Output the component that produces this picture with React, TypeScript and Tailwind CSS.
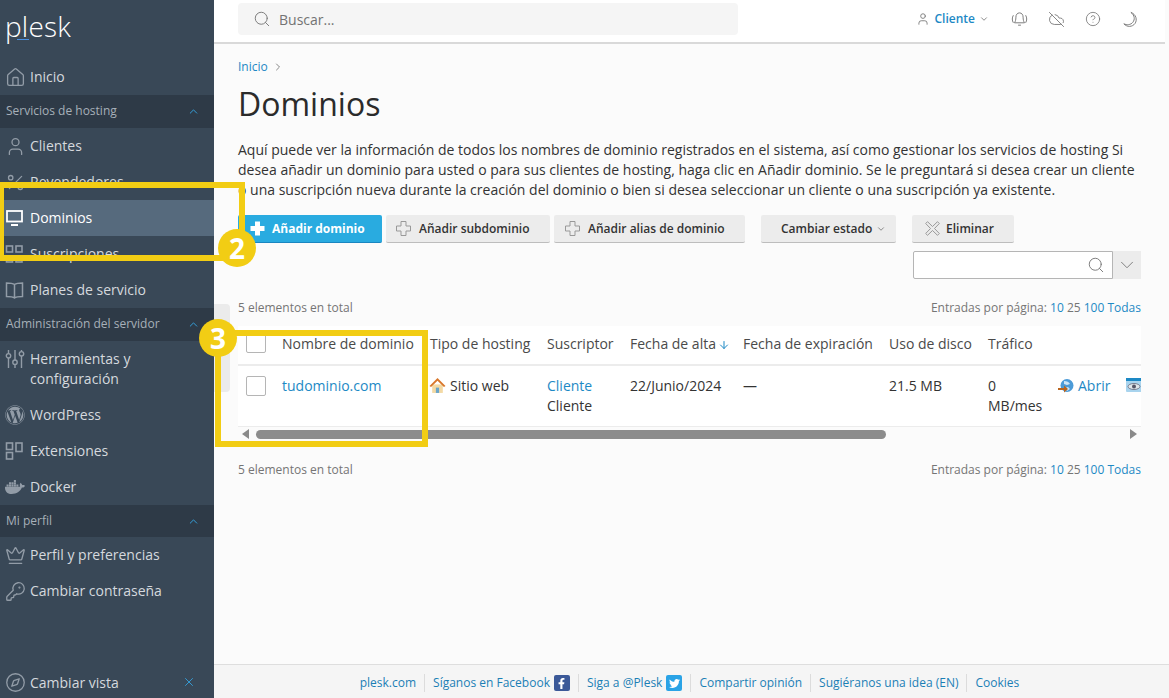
import {
  ChevronDown,
  ChevronRight,
  ChevronUp,
  CircleHelp,
  CloudOff,
  Compass,
  Crown,
  KeyRound,
  Percent,
  Search,
  House,
  User,
  X,
  ArrowDown,
} from "lucide-react";
import { FaDocker, FaFacebookF, FaTwitter, FaWordpress } from "react-icons/fa";
import type { ReactNode } from "react";

const iconClass = "h-[21px] w-[21px] shrink-0 stroke-[1.5]";

function Squares() {
  return (
    <svg viewBox="0 0 20 20" className="h-5 w-5 shrink-0" fill="none" stroke="currentColor" strokeWidth="1.6">
      <rect x="1.5" y="2" width="6" height="6" />
      <rect x="11" y="2" width="6" height="6" />
      <rect x="1.5" y="12" width="6" height="6" />
      <rect x="11" y="12" width="6" height="6" />
    </svg>
  );
}

function ExtIcon() {
  return (
    <svg viewBox="0 0 20 20" className="h-5 w-5 shrink-0" fill="none" stroke="currentColor" strokeWidth="1.6">
      <rect x="1.5" y="2" width="6" height="6.5" />
      <rect x="11" y="2" width="6" height="8.5" />
      <rect x="1.5" y="11.5" width="6" height="6.5" />
    </svg>
  );
}

function MonitorIcon() {
  return (
    <svg viewBox="0 0 20 20" className="h-5 w-5 shrink-0" fill="none" stroke="currentColor">
      <rect x="2" y="3" width="15" height="10.5" strokeWidth="1.8" />
      <path d="M6 17h7" strokeWidth="2" />
    </svg>
  );
}

function BookIcon() {
  return (
    <svg viewBox="0 0 20 20" className="h-5 w-5 shrink-0" fill="none" stroke="currentColor" strokeWidth="1.5">
      <path d="M9.5 4.5C8 3.5 4 3 1.5 3v13.5c2.500 0 6.500.2 8 1.500 1.500-1.300 5.500-1.500 8-1.500V3c-2.500 0-6.500.5-8 1.500zM9.500 4.500V18" />
    </svg>
  );
}

function ToolsIcon() {
  return (
    <svg viewBox="0 0 20 20" className="h-5 w-5 shrink-0" fill="none" stroke="currentColor" strokeWidth="1.4">
      <path d="M3.500 1v3.500M3.500 9v10M10 1v10M10 15.500V19M16.500 1v1.500M16.500 7v12" />
      <circle cx="3.500" cy="6.800" r="2.200" />
      <circle cx="10" cy="13.200" r="2.200" />
      <circle cx="16.500" cy="4.800" r="2.200" />
    </svg>
  );
}

function NavIcon({ children, active }: { children: ReactNode; active?: boolean }) {
  return (
    <span className={`flex w-5 shrink-0 justify-center ${active ? "text-white" : "text-[#929ca7]"}`}>{children}</span>
  );
}

function NavItem({ icon, children, active }: { icon: ReactNode; children: ReactNode; active?: boolean }) {
  return (
    <div
      className={`flex min-h-9 items-center gap-[5px] pl-[5px] text-[14px] leading-5 ${
        active ? "bg-[#566a7d] text-white" : "text-[#d5d9de]"
      }`}
    >
      <NavIcon active={active}>{icon}</NavIcon>
      <span>{children}</span>
    </div>
  );
}

function NavGroup({ title, short }: { title: string; short?: boolean }) {
  return (
    <div
      className={`flex items-center justify-between bg-[#2e3a47] pl-[6px] pr-[14px] text-[12px] text-[#a7b0b9] ${
        short ? "h-8" : "h-[33px] pb-[1px]"
      }`}
    >
      <span>{title}</span>
      <ChevronUp className="h-[13px] w-[13px] stroke-[1.75] text-[#35a4e0]" />
    </div>
  );
}

function Sidebar() {
  return (
    <aside className="flex h-full w-[214px] shrink-0 flex-col bg-[#394857]">
      <div className="relative h-[59px] shrink-0">
        <span className="absolute left-[5px] top-[2px] text-[28px] font-light leading-[48px] tracking-[0.2px] text-white">
          plesk
        </span>
        <span className="absolute left-[17px] top-[39px] h-[1px] w-3 bg-[#4a90e2]" />
      </div>
      <NavItem icon={<House className={iconClass} />}>Inicio</NavItem>
      <NavGroup title="Servicios de hosting" />
      <NavItem icon={<User className={iconClass} />}>Clientes</NavItem>
      <NavItem icon={<Percent className={iconClass} />}>Revendedores</NavItem>
      <NavItem active icon={<MonitorIcon />}>
        Dominios
      </NavItem>
      <NavItem icon={<Squares />}>Suscripciones</NavItem>
      <NavItem icon={<BookIcon />}>Planes de servicio</NavItem>
      <NavGroup title="Administración del servidor" />
      <div className="flex items-start gap-[5px] py-2 pl-[5px] text-[14px] leading-5 text-[#d5d9de]">
        <NavIcon>
          <ToolsIcon />
        </NavIcon>
        <span>
          Herramientas y
          <br />
          configuración
        </span>
      </div>
      <NavItem icon={<FaWordpress className="h-5 w-5" />}>WordPress</NavItem>
      <NavItem icon={<ExtIcon />}>Extensiones</NavItem>
      <NavItem icon={<FaDocker className="h-5 w-5" />}>Docker</NavItem>
      <NavGroup short title="Mi perfil" />
      <NavItem icon={<Crown className={iconClass} />}>Perfil y preferencias</NavItem>
      <NavItem icon={<KeyRound className={iconClass} />}>Cambiar contraseña</NavItem>
      <div className="mt-auto flex h-[30px] items-center justify-between pb-[2px] pl-[5px] pr-[18px] text-[14px] text-[#d5d9de]">
        <div className="flex items-center gap-[5px]">
          <NavIcon>
            <Compass className={iconClass} />
          </NavIcon>
          <span>Cambiar vista</span>
        </div>
        <X className="h-[14px] w-[14px] stroke-[1.5] text-[#35a4e0]" />
      </div>
    </aside>
  );
}

function BellIcon() {
  return (
    <svg viewBox="0 0 18 18" className="ml-[22px] h-[17px] w-[17px]" fill="none" stroke="currentColor" strokeWidth="1">
      <path d="M9 2c-2.500 0-3.800 2-3.800 4.500 0 3-.7 4.800-1.500 6h10.600c-.8-1.200-1.500-3-1.500-6C12.800 4 11.500 2 9 2zM7.500 15h3" />
      <path d="M2.500 4.500C1 7 1 10 2.500 12.500M15.500 4.500c1.500 2.500 1.500 5.500 0 8" />
    </svg>
  );
}

function MoonIcon() {
  return (
    <svg viewBox="0 0 18 18" className="ml-[20px] h-[17px] w-[17px]" fill="none" stroke="currentColor" strokeWidth="1">
      <path d="M10.500 1.500c4 3 4.500 7.500 2 10.500-2.300 2.800-6.500 3.200-9.500 1.500 3.500 4 9 3.500 11.800-.2 2.700-3.800 1.200-9.800-4.300-11.800z" />
    </svg>
  );
}

function Header() {
  return (
    <header className="mr-1 flex h-11 shrink-0 items-start justify-between border-b-2 border-[#d9d9d9] bg-white pl-6 pr-[27px] pt-[3px]">
      <div className="flex h-8 w-[500px] items-center gap-2 rounded bg-[#f5f5f5] pl-[15px] text-[14px] text-[#737373]">
        <Search className="h-[18px] w-[18px] stroke-[1.25] text-[#777]" />
        <span>Buscar...</span>
      </div>
      <div className="flex h-8 items-center text-[#777]">
        <User className="h-[14px] w-[14px] stroke-[1.5]" />
        <span className="ml-[5px] text-[12px] font-semibold text-[#1d89c5]">Cliente</span>
        <ChevronDown className="ml-1 h-2.5 w-2.5" />
        <BellIcon />
        <CloudOff className="ml-[20px] h-[17px] w-[17px] stroke-[1.25]" />
        <CircleHelp className="ml-[20px] h-4 w-4 stroke-[1.25]" />
        <MoonIcon />
      </div>
    </header>
  );
}

function ToolButton({ icon, children, className }: { icon?: ReactNode; children: ReactNode; className: string }) {
  return (
    <button
      className={`flex h-7 items-center rounded-[2px] border-b border-[#bdbdbd] bg-[#ececec] text-[12px] font-semibold text-[#333] ${className}`}
    >
      {icon}
      {children}
    </button>
  );
}

function CrossIcon({ solid }: { solid?: boolean }) {
  return (
    <svg
      viewBox="0 0 15 15"
      className="h-[15px] w-[15px] shrink-0"
      fill={solid ? "#fff" : "none"}
      stroke={solid ? "none" : "#999"}
    >
      <path d="M5 .5h5v4.500h4.500v5H10v4.500H5V10H.5V5H5z" />
    </svg>
  );
}

function CrossX() {
  return (
    <svg viewBox="0 0 15 15" className="mr-[6px] h-[15px] w-[15px] shrink-0" fill="none" stroke="#999">
      <path d="M2.500.7 7.500 5.500 12.500.7l1.800 1.800-4.800 5 4.800 5-1.800 1.800-5-4.800-5 4.800L.7 12.500l4.800-5-4.800-5z" />
    </svg>
  );
}

function PageLinks() {
  return (
    <div className="flex items-center justify-between text-[12px] text-[#757575]">
      <span>5 elementos en total</span>
      <span>
        Entradas por página: <span className="text-[#1d89c5]">10</span> 25{" "}
        <span className="text-[#1d89c5]">100 Todas</span>
      </span>
    </div>
  );
}

function HomeIcon() {
  return (
    <svg viewBox="0 0 16 16" className="-ml-[1px] mr-1 inline-block h-[17px] w-[17px] align-[-3px]">
      <rect x="3" y="7" width="10" height="8" fill="#f3d9a4" />
      <rect x="6.500" y="10" width="3" height="5" fill="#6aa5c9" />
      <path d="M0.500 8.500 8 1l7.500 7.500-1.400 1L8 3.600 1.900 9.500z" fill="#d9772b" />
    </svg>
  );
}

function DomainTable() {
  const th = "h-[39px] whitespace-nowrap px-0 pb-[4px] text-left text-[14px] font-normal text-[#4a4a4a]";
  const cell = "px-0 py-[10px] align-top text-[14px] leading-5";
  const td = `${cell} text-[#333]`;
  return (
    <table className="w-[903px] table-fixed border-collapse bg-white">
      <colgroup>
        <col className="w-[44px]" />
        <col className="w-[148px]" />
        <col className="w-[117px]" />
        <col className="w-[83px]" />
        <col className="w-[113px]" />
        <col className="w-[146px]" />
        <col className="w-[99px]" />
        <col className="w-[70px]" />
        <col />
      </colgroup>
      <thead>
        <tr className="border-b-2 border-[#ececec]">
          <th className={th}>
            <span className="ml-2 block h-5 w-5 rounded-[2px] border border-[#b5b5b5] bg-white" />
          </th>
          <th className={th}>Nombre de dominio</th>
          <th className={th}>Tipo de hosting</th>
          <th className={th}>Suscriptor</th>
          <th className={th}>
            Fecha de alta <ArrowDown className="-ml-[2px] inline h-3 w-3 text-[#1d89c5]" />
          </th>
          <th className={th}>Fecha de expiración</th>
          <th className={th}>Uso de disco</th>
          <th className={th}>Tráfico</th>
          <th className={th} />
        </tr>
      </thead>
      <tbody>
        <tr className="border-b border-[#ececec]">
          <td className={td}>
            <span className="ml-2 block h-5 w-5 rounded-[2px] border border-[#b5b5b5] bg-white" />
          </td>
          <td className={`${cell} text-[#1d89c5]`}>tudominio.com</td>
          <td className={td}>
            <HomeIcon />
            Sitio web
          </td>
          <td className={td}>
            <span className="text-[#1d89c5]">Cliente</span>
            <br />
            Cliente
          </td>
          <td className={td}>22/Junio/2024</td>
          <td className={td}>—</td>
          <td className={td}>21.5 MB</td>
          <td className={td}>
            0
            <br />
            MB/mes
          </td>
          <td className={td}>
            <div className="flex items-start overflow-hidden">
              <svg viewBox="0 0 16 16" className="mr-1 mt-[2px] h-4 w-4 shrink-0">
                <circle cx="9" cy="7.500" r="6.500" fill="#4c9bd8" />
                <path d="M6 3c3 0 5 1 6 3l-3 1-3-1zM7 10l3-1 2 2-3 2z" fill="#cfe6f7" />
                <path d="M0 10h6V7.500l4 3.500-4 3.500V12H0z" fill="#b9651f" />
              </svg>
              <span className="text-[#1d89c5]">Abrir</span>
              <svg viewBox="0 0 16 14" className="ml-4 mt-[2px] h-[14px] w-4 shrink-0">
                <rect width="16" height="14" rx="1" fill="#a9d4ee" />
                <rect width="16" height="3" fill="#1d89c5" />
                <ellipse cx="8" cy="8.500" rx="6" ry="3" fill="#dfe6ea" stroke="#667" strokeWidth="0.8" />
                <circle cx="8" cy="8.500" r="2" fill="#556" />
              </svg>
            </div>
          </td>
        </tr>
      </tbody>
    </table>
  );
}

function ScrollBar() {
  return (
    <div className="flex h-[14px] items-center">
      <span className="ml-1 border-y-[5px] border-r-[7px] border-y-transparent border-r-[#8a8a8a]" />
      <span className="ml-[7px] h-[9px] w-[630px] rounded-full bg-[#8c8c8c]" />
      <span className="ml-auto mr-1 border-y-[5px] border-l-[7px] border-y-transparent border-l-[#8a8a8a]" />
    </div>
  );
}

function Footer() {
  const sep = "border-l border-[#dcdcdc] pl-2 ml-2";
  return (
    <footer className="mt-auto flex h-[34px] shrink-0 items-center justify-center border-t border-[#dedede] bg-[#f5f5f5] pr-[4px] pt-[3px] text-[12px] text-[#1b7fb5]">
      <span>plesk.com</span>
      <span className={`${sep} flex items-center`}>
        Síganos en Facebook
        <span className="ml-1 flex h-4 w-4 items-center justify-center rounded-[2px] bg-[#3b5998] text-white">
          <FaFacebookF className="h-[11px] w-[11px]" />
        </span>
      </span>
      <span className={`${sep} flex items-center`}>
        Siga a @Plesk
        <span className="ml-1 flex h-4 w-4 items-center justify-center rounded-[2px] bg-[#2aa3e6] text-white">
          <FaTwitter className="h-[11px] w-[11px]" />
        </span>
      </span>
      <span className={sep}>Compartir opinión</span>
      <span className={sep}>Sugiéranos una idea (EN)</span>
      <span className={sep}>Cookies</span>
    </footer>
  );
}

function Badge({ n, className }: { n: string; className: string }) {
  return (
    <span
      className={`absolute flex h-[38px] w-[38px] items-center justify-center rounded-full bg-[#f2cd14] text-[28px] font-bold text-white ${className}`}
    >
      {n}
    </span>
  );
}

export default function App() {
  return (
    <div
      className="relative flex h-[698px] w-[1169px] overflow-hidden bg-[#fbfbfb]"
      style={{ fontFamily: '"Open Sans", sans-serif' }}
    >
      <Sidebar />
      <main className="flex h-full min-w-0 flex-1 flex-col">
        <Header />
        <div className="flex flex-col pl-6 pr-7 pt-[14px]">
          <div className="flex items-center text-[12px] leading-[18px] text-[#1d89c5]">
            Inicio
            <ChevronRight className="ml-1 h-3 w-3 text-[#888]" />
          </div>
          <h1 className="mt-2 text-[32px] font-normal leading-10 text-[#2b2b2b]">Dominios</h1>
          <p className="mt-4 w-[903px] text-[14px] leading-5 text-[#333]">
            Aquí puede ver la información de todos los nombres de dominio registrados en el sistema, así como gestionar
            los servicios de hosting Si desea añadir un dominio para usted o para sus clientes de hosting, haga clic en
            Añadir dominio. Se le preguntará si desea crear un cliente o una suscripción nueva durante la creación del
            dominio o bien si desea seleccionar un cliente o una suscripción ya existente.
          </p>
          <div className="mt-[15px] flex w-[903px]">
            <button className="flex h-7 w-[144px] items-center gap-[7px] rounded-[2px] border-b border-[#1a86c0] bg-[#29abe0] pl-3 text-[12px] font-bold text-white">
              <CrossIcon solid />
              Añadir dominio
            </button>
            <ToolButton className="ml-1 w-[164px] gap-2 pl-[10px]" icon={<CrossIcon />}>
              Añadir subdominio
            </ToolButton>
            <ToolButton className="ml-1 w-[191px] gap-2 pl-[11px]" icon={<CrossIcon />}>
              Añadir alias de dominio
            </ToolButton>
            <ToolButton className="ml-4 w-[135px] pl-5">
              Cambiar estado
              <ChevronDown className="ml-1 h-2.5 w-2.5 text-[#777]" />
            </ToolButton>
            <ToolButton className="ml-4 w-[102px] pl-[13px]" icon={<CrossX />}>
              Eliminar
            </ToolButton>
          </div>
          <div className="mt-2 flex w-[903px] justify-end">
            <div className="flex h-7 w-[200px] items-center justify-end rounded-l-[2px] border border-[#b5b5b5] bg-white pr-[7px]">
              <Search className="h-[18px] w-[18px] stroke-[1.25] text-[#777]" />
            </div>
            <div className="flex h-7 w-7 items-center justify-center bg-[#ececec]">
              <ChevronDown className="h-[22px] w-[22px] stroke-1 text-[#777]" />
            </div>
          </div>
          <div className="mt-5 w-[903px]">
            <PageLinks />
          </div>
          <div className="mt-[9px] w-[903px]">
            <DomainTable />
            <ScrollBar />
          </div>
          <div className="mt-5 w-[903px]">
            <PageLinks />
          </div>
        </div>
        <Footer />
      </main>

      {/* sidebar handle */}
      <span className="absolute left-[214px] top-[304px] h-[88px] w-4 rounded-r bg-[#ebebeb]" />

      {/* tutorial markers */}
      <span className="absolute left-[-2px] top-[182px] h-[79px] w-[247px] border-[6px] border-[#f2cd14]" />
      <span className="absolute left-[215px] top-[330px] h-[117px] w-[213px] border-[6px] border-[#f2cd14]" />
      <Badge n="2" className="left-[218px] top-[229px]" />
      <Badge n="3" className="left-[199px] top-[319px]" />
    </div>
  );
}
